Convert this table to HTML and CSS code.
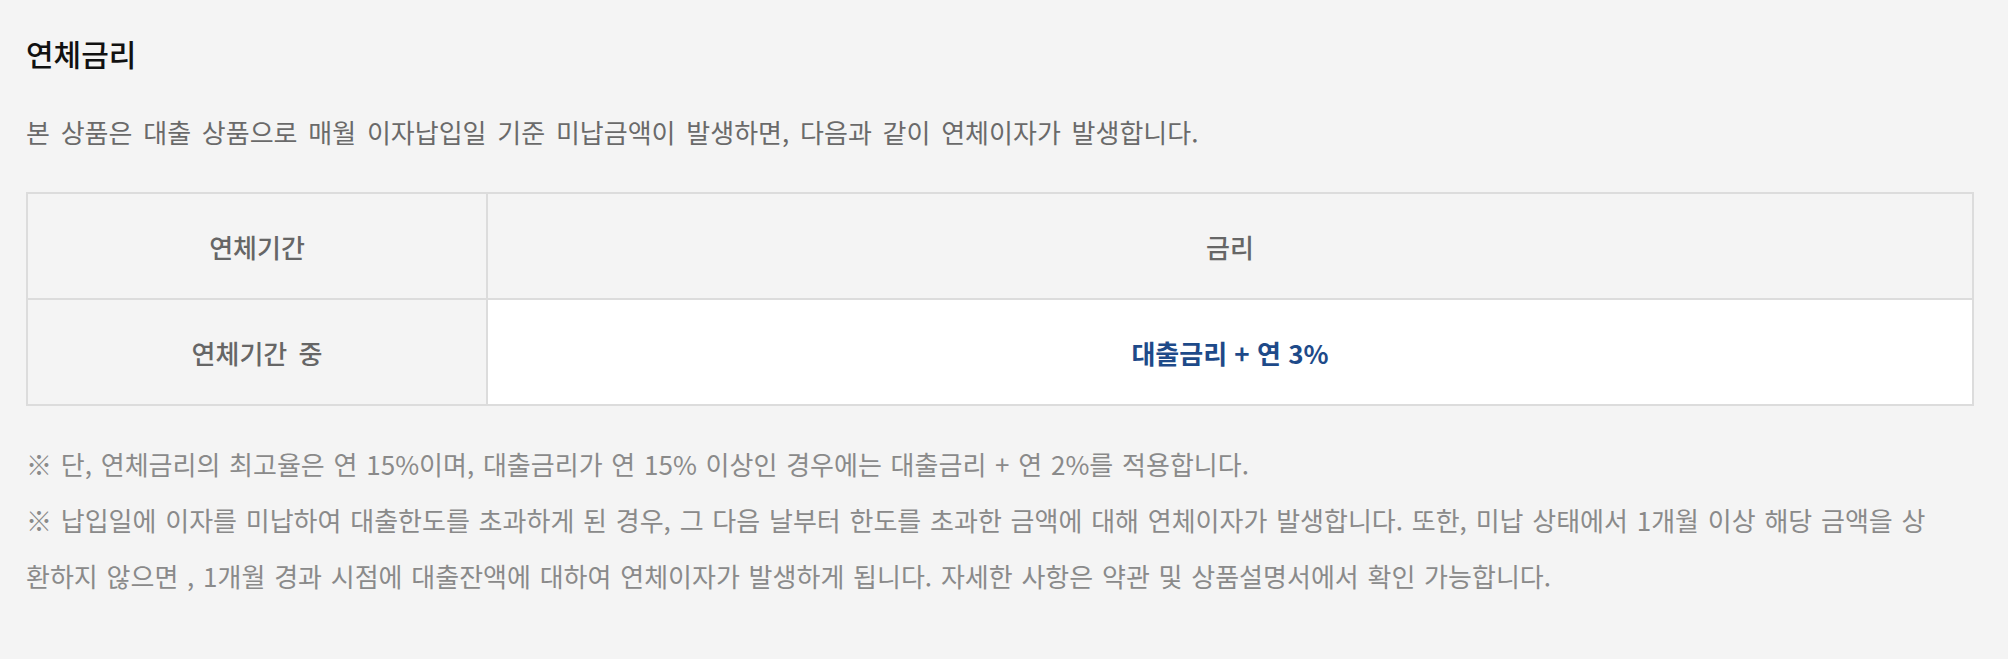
FILE: index.html
```html
<!DOCTYPE html>
<html lang="ko">
<head>
<meta charset="utf-8">
<title>연체금리</title>
<link rel="stylesheet" href="styles.css">
</head>
<body>
<section class="section">
  <h2 class="title">연체금리</h2>
  <p class="lead">본 상품은 대출 상품으로 매월 이자납입일 기준 미납금액이 발생하면, 다음과 같이 연체이자가 발생합니다.</p>
  <table class="rate-table">
    <colgroup>
      <col class="col-period">
      <col class="col-rate">
    </colgroup>
    <thead>
      <tr>
        <th>연체기간</th>
        <th>금리</th>
      </tr>
    </thead>
    <tbody>
      <tr>
        <th class="row-head">연체기간 중</th>
        <td class="rate">대출금리 + 연 3%</td>
      </tr>
    </tbody>
  </table>
  <ul class="notes">
    <li>※ 단, 연체금리의 최고율은 연 15%이며, 대출금리가 연 15% 이상인 경우에는 대출금리 + 연 2%를 적용합니다.</li>
    <li>※ 납입일에 이자를 미납하여 대출한도를 초과하게 된 경우, 그 다음 날부터 한도를 초과한 금액에 대해 연체이자가 발생합니다. 또한, 미납 상태에서 1개월 이상 해당 금액을 상환하지 않으면 , 1개월 경과 시점에 대출잔액에 대하여 연체이자가 발생하게 됩니다. 자세한 사항은 약관 및 상품설명서에서 확인 가능합니다.</li>
  </ul>
</section>
</body>
</html>
```
FILE: styles.css
```css
html, body {
  margin: 0;
  padding: 0;
  background: #f4f4f4;
}

body {
  font-family: "Noto Sans CJK KR", "Noto Sans", sans-serif;
  color: #666;
}

.section {
  padding: 32px 34px 0 26px;
}

.title {
  margin: 0;
  font-size: 30px;
  line-height: 42px;
  font-weight: 500;
  color: #111;
}

.lead {
  margin: 38px 0 0;
  font-size: 26px;
  line-height: 40px;
  word-spacing: 3.5px;
  color: #6a6a6a;
}

.rate-table {
  margin-top: 40px;
  width: 100%;
  border-collapse: collapse;
  border: 2px solid #dcdcdc;
  table-layout: fixed;
}

.col-period { width: 460px; }

.rate-table th,
.rate-table td {
  border: 2px solid #dcdcdc;
  height: 104px;
  padding: 0;
  text-align: center;
  font-size: 26px;
  font-weight: 500;
  word-spacing: 4px;
  color: #666;
  background: #f4f4f4;
}

.rate-table td.rate {
  background: #fff;
  color: #1e4a89;
  font-weight: 700;
  word-spacing: 0;
}

.notes {
  list-style: none;
  margin: 30px 0 0;
  padding: 0 40px 0 0;
  font-size: 26px;
  line-height: 56px;
  word-spacing: 1.5px;
  word-break: break-all;
  color: #8a8a8a;
}

.notes li {
  margin: 0;
}
```
